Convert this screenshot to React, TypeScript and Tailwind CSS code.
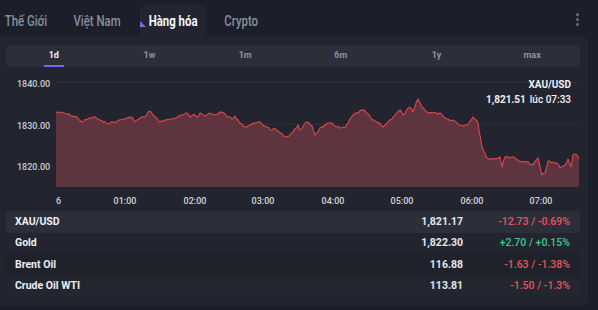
import React from "react";

const keys: [number, number][] = [
  [56, 112], [62, 113], [70, 115], [78, 118], [82, 122], [84, 121], [88, 119], [95, 117], [98, 119],
  [103, 122], [110, 123], [115, 122], [120, 120], [128, 118], [132, 117], [135, 122], [140, 118],
  [145, 117], [148, 112], [150, 111], [153, 115], [156, 118], [160, 122], [165, 120], [172, 119],
  [178, 117], [183, 115], [186, 113], [190, 117], [194, 114], [197, 117], [200, 113], [205, 116],
  [210, 113], [215, 115], [218, 114], [220, 112], [225, 114], [228, 117], [232, 119], [235, 116],
  [238, 120], [242, 124], [245, 127], [250, 125], [256, 123], [260, 122], [263, 125], [267, 127],
  [272, 130], [276, 129], [280, 133], [283, 135], [287, 137], [293, 132], [298, 125], [300, 130],
  [307, 122], [312, 126], [315, 135], [320, 128], [330, 123], [340, 128], [345, 128], [353, 115],
  [363, 110], [368, 114], [372, 120], [377, 122], [383, 127], [390, 120], [400, 110], [403, 115],
  [410, 107], [413, 112], [418, 99], [422, 107], [427, 112], [433, 113], [440, 113], [447, 119],
  [453, 120], [460, 125], [467, 125], [473, 117], [478, 123], [482, 147], [487, 158], [493, 159],
  [500, 157], [502, 167], [505, 157], [513, 157], [520, 162], [527, 162], [533, 165], [538, 158],
  [542, 175], [545, 173], [548, 161], [557, 163], [560, 168], [565, 165], [568, 159], [571, 167],
  [573, 155], [577, 155], [579, 159],
];

function buildPoints(): [number, number][] {
  const pts: [number, number][] = [];
  let seed = 7;
  const rnd = () => {
    seed = (seed * 9301 + 49297) % 233280;
    return seed / 233280;
  };
  for (let i = 0; i < keys.length - 1; i++) {
    const [x0, y0] = keys[i];
    const [x1, y1] = keys[i + 1];
    const steps = Math.max(1, Math.round((x1 - x0) / 1.6));
    for (let s = 0; s < steps; s++) {
      const t = s / steps;
      const x = x0 + (x1 - x0) * t;
      let y = y0 + (y1 - y0) * t;
      if (s > 0) y += (rnd() - 0.5) * 2.2;
      pts.push([x, y]);
    }
  }
  pts.push(keys[keys.length - 1]);
  return pts;
}

const OFFSET = 67;
const pts = buildPoints().map(([x, y]) => [x, y - OFFSET] as [number, number]);
const linePath = pts.map(([x, y], i) => `${i === 0 ? "M" : "L"}${x.toFixed(1)},${y.toFixed(1)}`).join(" ");
const areaPath = `${linePath} L579,120 L56,120 Z`;

const rows = [
  { name: "XAU/USD", price: "1,821.17", change: "-12.73 / -0.69%", up: false, bg: "bg-[#2c2f3a]" },
  { name: "Gold", price: "1,822.30", change: "+2.70 / +0.15%", up: true, bg: "bg-[#22252f]" },
  { name: "Brent Oil", price: "116.88", change: "-1.63 / -1.38%", up: false, bg: "bg-[#1f222b]" },
  { name: "Crude Oil WTI", price: "113.81", change: "-1.50 / -1.3%", up: false, bg: "bg-[#23262f]" },
];

const ranges = ["1d", "1w", "1m", "6m", "1y", "max"];
const xLabels: [string, number][] = [
  ["01:00", 125], ["02:00", 195], ["03:00", 263], ["04:00", 333], ["05:00", 402], ["06:00", 472], ["07:00", 541],
];

const tabs = [
  { label: "Thế Giới", w: "w-[58px]", active: false },
  { label: "Việt Nam", w: "w-[65px]", active: false },
  { label: "Hàng hóa", w: "w-[66px]", active: true },
  { label: "Crypto", w: "w-[51px]", active: false },
];

export default function App() {
  return (
    <div className="w-[598px] h-[310px] bg-[#1c1f29] overflow-hidden" style={{ fontFamily: "Roboto, 'Noto Sans', sans-serif" }}>
      {/* Tabs */}
      <div className="h-[36px] flex items-end relative">
        <div className="flex ml-[-3px] gap-[10px] h-[31px]">
          {tabs.map((t) => (
            <div
              key={t.label}
              className={`${t.w} relative flex items-center justify-center whitespace-nowrap ${t.active ? "bg-[#22252f] rounded-t-[5px]" : ""}`}
            >
              {t.active && (
                <svg className="absolute left-0 top-[16px]" width="6" height="6" viewBox="0 0 6 6">
                  <polygon points="0,0 0,6 6,6" fill="#7b67e8" />
                </svg>
              )}
              <span
                className={`inline-block scale-x-[0.76] text-[15px] leading-[18px] ${t.active ? "text-[#f6f6f8] font-bold" : "text-[#8b8e9c] font-medium"}`}
              >
                {t.label}
              </span>
            </div>
          ))}
        </div>
        <div className="absolute left-[576px] top-[13px] flex flex-col gap-[2px]">
          <span className="w-[3px] h-[3px] rounded-full bg-[#6b6e7b]" />
          <span className="w-[3px] h-[3px] rounded-full bg-[#6b6e7b]" />
          <span className="w-[3px] h-[3px] rounded-full bg-[#6b6e7b]" />
        </div>
      </div>

      {/* Panel */}
      <div className="w-[588px] h-[270px] bg-[#22252f] rounded-r-[6px] pt-[9px] pl-[6px] pr-[8px]">
        <div className="h-[22px] bg-[#2c2f3a] rounded-[4px] grid grid-cols-6">
          {ranges.map((r, i) => (
            <div key={r} className="relative flex items-center justify-center">
              <span className={`text-[9px] font-bold ${i === 0 ? "text-[#f2f2f5]" : "text-[#8e91a1]"}`}>{r}</span>
              {i === 0 && <span className="absolute bottom-0 left-[38px] w-[20px] h-[2px] bg-[#7b68ee] rounded-t-[1px]" />}
            </div>
          ))}
        </div>

        {/* Chart */}
        <div className="relative ml-[-6px] h-[144px]">
          <svg width="588" height="144" className="block">
            <line x1="56" x2="579" y1="15.5" y2="15.5" stroke="#2d303b" strokeWidth="1" />
            <line x1="56" x2="579" y1="57.5" y2="57.5" stroke="#2d303b" strokeWidth="1" />
            <line x1="56" x2="579" y1="99.5" y2="99.5" stroke="#2d303b" strokeWidth="1" />
            <path d={areaPath} fill="#5e343e" />
            <path d={linePath} fill="none" stroke="#e0464c" strokeWidth="1.1" strokeLinejoin="round" />
            <g fill="#c9cbd3" fontSize="9" fontWeight="500" style={{ fontFamily: "Roboto, sans-serif" }}>
              <text x="17" y="19.5">1840.00</text>
              <text x="17" y="61.5">1830.00</text>
              <text x="17" y="103">1820.00</text>
            </g>
            <g fill="#d2d4db" fontSize="9" fontWeight="500" textAnchor="middle" style={{ fontFamily: "Roboto, sans-serif" }}>
              <text x="58.5" y="136.5">6</text>
              {xLabels.map(([l, x]) => (
                <text key={l} x={x} y="136.5">{l}</text>
              ))}
            </g>
          </svg>
          <div className="absolute right-[9px] top-[10px] text-right leading-[15px]">
            <div className="text-[10px] font-bold text-[#f0f0f3]">XAU/USD</div>
            <div className="text-[10px] text-[#f0f0f3]">
              <span className="font-bold">1,821.51</span>
              <span className="ml-[4px] font-medium">lúc 07:33</span>
            </div>
          </div>
        </div>

        {/* Table */}
        <div className="flex flex-col">
          {rows.map((r) => (
            <div key={r.name} className={`h-[21.5px] flex items-center ${r.bg} pl-[9px] pr-[10px] rounded-[2px]`}>
              <span className="flex-1 text-[10.5px] font-bold text-[#eceef2]">{r.name}</span>
              <span className="w-[80px] text-right text-[10.5px] font-bold text-[#e4e6eb]">{r.price}</span>
              <span className={`w-[107px] text-right text-[10.5px] font-medium ${r.up ? "text-[#3ec98a]" : "text-[#ee5259]"}`}>{r.change}</span>
            </div>
          ))}
        </div>
      </div>
    </div>
  );
}
